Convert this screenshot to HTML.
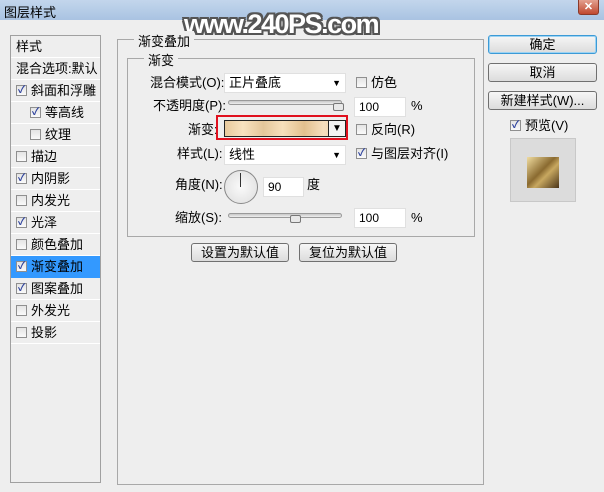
<!DOCTYPE html>
<html><head><meta charset="utf-8"><style>
*{margin:0;padding:0;box-sizing:border-box}
body{width:604px;height:492px;background:#eeeeee;font-family:"Liberation Sans","Noto Sans CJK SC",sans-serif;font-size:12px;color:#000;position:relative;overflow:hidden}
.a{position:absolute;white-space:nowrap}
.title{left:0;top:0;width:604px;height:20px;background:linear-gradient(#c3d6ec,#a9c3e2);}
.close{left:578px;top:0;width:21px;height:15px;background:linear-gradient(#e3a08f,#c0482f);border:1px solid #8a3a2a;border-top:none;border-radius:0 0 3px 3px;color:#fff;font-size:11px;font-weight:bold;text-align:center;line-height:14px}
.list{left:10px;top:35px;width:91px;height:448px;border:1px solid #a0a0a0;background:#eeeeee}
.row{position:absolute;left:0;width:89px;height:22px;border-bottom:1px solid #fff;line-height:21px;font-size:13px}
.cb{position:absolute;width:11px;height:11px;border:1px solid #8f8f8f;background:linear-gradient(#e4e4e4,#fafafa);font-size:10px;line-height:9px;text-align:center;color:#2a3f9c;font-weight:bold}
.grp{border:1px solid #a8a8a8}
.lbl{background:#eeeeee;padding:0 4px;font-size:13px}
.in{background:#fff;border:1px solid #e0e0e0;height:20px;line-height:18px;padding-left:4px;font-size:12px}
.btn{border:1px solid #707070;border-radius:3px;background:linear-gradient(#f6f6f6,#dcdcdc);text-align:center;font-size:13px;line-height:17px;height:19px}
.slider{height:5px;border:1px solid #9a9a9a;border-radius:3px;background:linear-gradient(#c8c8c8,#eee)}
.thumb{width:11px;height:8px;background:#e8e8e8;border:1px solid #777;border-radius:2px}
.t{font-size:13px;line-height:15px}
</style></head><body>
<div class="a title"></div>
<div class="a" style="left:4px;top:2px;font-size:13px">图层样式</div>
<div class="a close">✕</div>
<div class="a" style="left:184px;top:9px;font-size:27px;font-weight:bold;color:#fff;font-family:'Liberation Sans',sans-serif;letter-spacing:-1.5px;text-shadow:-2px -2px 0 #555,2px -2px 0 #555,-2px 2px 0 #555,2px 2px 0 #555,0 2px 0 #555,0 -2px 0 #555,2px 0 0 #555,-2px 0 0 #555">www.240PS.com</div>

<div class="a list">
<div class="row" style="top:0;padding-left:5px">样式</div>
<div class="row" style="top:22px;padding-left:5px">混合选项:默认</div>
<div class="row" style="top:44px"><span class="cb" style="left:5px;top:5px">✓</span><span style="position:absolute;left:20px">斜面和浮雕</span></div>
<div class="row" style="top:66px"><span class="cb" style="left:19px;top:5px">✓</span><span style="position:absolute;left:34px">等高线</span></div>
<div class="row" style="top:88px"><span class="cb" style="left:19px;top:5px"></span><span style="position:absolute;left:34px">纹理</span></div>
<div class="row" style="top:110px"><span class="cb" style="left:5px;top:5px"></span><span style="position:absolute;left:20px">描边</span></div>
<div class="row" style="top:132px"><span class="cb" style="left:5px;top:5px">✓</span><span style="position:absolute;left:20px">内阴影</span></div>
<div class="row" style="top:154px"><span class="cb" style="left:5px;top:5px"></span><span style="position:absolute;left:20px">内发光</span></div>
<div class="row" style="top:176px"><span class="cb" style="left:5px;top:5px">✓</span><span style="position:absolute;left:20px">光泽</span></div>
<div class="row" style="top:198px"><span class="cb" style="left:5px;top:5px"></span><span style="position:absolute;left:20px">颜色叠加</span></div>
<div class="row" style="top:220px;background:#3399ff;border-bottom-color:#3399ff"><span class="cb" style="left:5px;top:5px">✓</span><span style="position:absolute;left:20px">渐变叠加</span></div>
<div class="row" style="top:242px"><span class="cb" style="left:5px;top:5px">✓</span><span style="position:absolute;left:20px">图案叠加</span></div>
<div class="row" style="top:264px"><span class="cb" style="left:5px;top:5px"></span><span style="position:absolute;left:20px">外发光</span></div>
<div class="row" style="top:286px"><span class="cb" style="left:5px;top:5px"></span><span style="position:absolute;left:20px">投影</span></div>
</div>

<div class="a grp" style="left:117px;top:39px;width:367px;height:446px"></div>
<div class="a lbl" style="left:134px;top:31px">渐变叠加</div>
<div class="a grp" style="left:127px;top:58px;width:348px;height:179px"></div>
<div class="a lbl" style="left:144px;top:50px">渐变</div>

<div class="a t" style="left:150px;top:75px">混合模式(O):</div>
<div class="a in" style="left:224px;top:73px;width:122px;font-size:13px">正片叠底<span style="position:absolute;right:4px;top:0;font-size:9px">▼</span></div>
<div class="a cb" style="left:356px;top:77px"></div><div class="a t" style="left:371px;top:75px">仿色</div>

<div class="a t" style="left:153px;top:98px">不透明度(P):</div>
<div class="a slider" style="left:228px;top:100px;width:114px"></div>
<div class="a thumb" style="left:333px;top:103px"></div>
<div class="a in" style="left:354px;top:97px;width:52px">100</div>
<div class="a t" style="left:411px;top:98px">%</div>

<div class="a t" style="left:188px;top:122px">渐变:</div>
<div class="a" style="left:216px;top:115px;width:132px;height:25px;border:2px solid #e0101e"></div>
<div class="a" style="left:224px;top:120px;width:122px;height:17px;border:1px solid #222;background:linear-gradient(90deg,#e8c99c,#f8e2c0 15%,#e4c69a 32%,#f7e0bc 48%,#e2c08e 66%,#f6dfbe 82%,#e9cda4)"></div>
<div class="a" style="left:328px;top:120px;width:18px;height:17px;border:1px solid #222;background:#f4f4f4;text-align:center;font-size:10px;line-height:15px">▼</div>
<div class="a cb" style="left:356px;top:124px"></div><div class="a t" style="left:371px;top:122px">反向(R)</div>

<div class="a t" style="left:177px;top:146px">样式(L):</div>
<div class="a in" style="left:224px;top:145px;width:122px;font-size:13px">线性<span style="position:absolute;right:4px;top:0;font-size:9px">▼</span></div>
<div class="a cb" style="left:356px;top:148px">✓</div><div class="a t" style="left:371px;top:146px">与图层对齐(I)</div>

<div class="a t" style="left:175px;top:177px">角度(N):</div>
<div class="a" style="left:224px;top:170px;width:34px;height:34px;border:1px solid #888;border-radius:50%;background:radial-gradient(#fafafa,#ddd)"></div>
<div class="a" style="left:240px;top:173px;width:1px;height:14px;background:#333"></div>
<div class="a in" style="left:263px;top:177px;width:41px">90</div>
<div class="a t" style="left:307px;top:177px">度</div>

<div class="a t" style="left:175px;top:210px">缩放(S):</div>
<div class="a slider" style="left:228px;top:213px;width:114px"></div>
<div class="a thumb" style="left:290px;top:215px"></div>
<div class="a in" style="left:354px;top:208px;width:52px">100</div>
<div class="a t" style="left:411px;top:210px">%</div>

<div class="a btn" style="left:191px;top:243px;width:98px">设置为默认值</div>
<div class="a btn" style="left:299px;top:243px;width:98px">复位为默认值</div>

<div class="a btn" style="left:488px;top:35px;width:109px;border-color:#3c9ad6;box-shadow:inset 0 0 0 1px #9cd3f3">确定</div>
<div class="a btn" style="left:488px;top:63px;width:109px">取消</div>
<div class="a btn" style="left:488px;top:91px;width:109px">新建样式(W)...</div>
<div class="a cb" style="left:510px;top:120px">✓</div><div class="a t" style="left:525px;top:118px">预览(V)</div>
<div class="a" style="left:510px;top:138px;width:66px;height:64px;background:#dcdcdc;border:1px solid #c8c8c8"></div>
<div class="a" style="left:527px;top:157px;width:32px;height:31px;background:linear-gradient(135deg,#f0dca0,#8a6a30 45%,#c8a860 60%,#4a3418)"></div>
</body></html>
